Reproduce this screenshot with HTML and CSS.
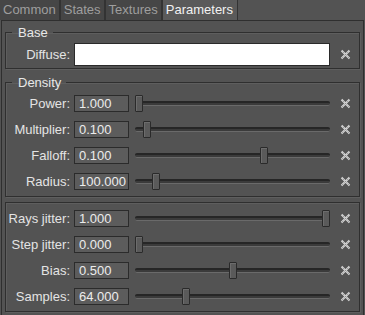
FILE: index.html
```html
<!DOCTYPE html>
<html>
<head>
<meta charset="utf-8">
<link rel="stylesheet" href="styles.css">
</head>
<body>
<div class="tabs">
  <div class="tab">Common</div>
  <div class="tab">States</div>
  <div class="tab">Textures</div>
  <div class="tab active">Parameters</div>
</div>
<div class="pane">
  <fieldset class="group">
    <legend>Base</legend>
    <div class="grid">
      <label class="lbl">Diffuse:</label>
      <div class="color-input"></div>
      <span class="clear tall"><svg width="11" height="11" viewBox="0 0 11 11"><path d="M1.5 1.5L9.5 9.5M9.5 1.5L1.5 9.5" stroke="#d4d4d4" stroke-width="2"/><path d="M1.5 1.5L9.5 9.5M9.5 1.5L1.5 9.5" stroke="#777" stroke-width="0.9" stroke-dasharray="0.9 1.5"/></svg></span>
    </div>
  </fieldset>

  <fieldset class="group density">
    <legend>Density</legend>
    <div class="grid rows">
      <label class="lbl">Power:</label><div class="spin">1.000</div>
      <div class="slider"><div class="groove"></div><div class="handle" style="left:calc(0 * (100% - 8px))"></div></div>
      <span class="clear"><svg width="11" height="11" viewBox="0 0 11 11"><path d="M1.5 1.5L9.5 9.5M9.5 1.5L1.5 9.5" stroke="#d4d4d4" stroke-width="2"/><path d="M1.5 1.5L9.5 9.5M9.5 1.5L1.5 9.5" stroke="#777" stroke-width="0.9" stroke-dasharray="0.9 1.5"/></svg></span>

      <label class="lbl">Multiplier:</label><div class="spin">0.100</div>
      <div class="slider"><div class="groove"></div><div class="handle" style="left:calc(0.043 * (100% - 8px))"></div></div>
      <span class="clear"><svg width="11" height="11" viewBox="0 0 11 11"><path d="M1.5 1.5L9.5 9.5M9.5 1.5L1.5 9.5" stroke="#d4d4d4" stroke-width="2"/><path d="M1.5 1.5L9.5 9.5M9.5 1.5L1.5 9.5" stroke="#777" stroke-width="0.9" stroke-dasharray="0.9 1.5"/></svg></span>

      <label class="lbl">Falloff:</label><div class="spin">0.100</div>
      <div class="slider"><div class="groove"></div><div class="handle" style="left:calc(0.67 * (100% - 8px))"></div></div>
      <span class="clear"><svg width="11" height="11" viewBox="0 0 11 11"><path d="M1.5 1.5L9.5 9.5M9.5 1.5L1.5 9.5" stroke="#d4d4d4" stroke-width="2"/><path d="M1.5 1.5L9.5 9.5M9.5 1.5L1.5 9.5" stroke="#777" stroke-width="0.9" stroke-dasharray="0.9 1.5"/></svg></span>

      <label class="lbl">Radius:</label><div class="spin">100.000</div>
      <div class="slider"><div class="groove"></div><div class="handle" style="left:calc(0.09 * (100% - 8px))"></div></div>
      <span class="clear"><svg width="11" height="11" viewBox="0 0 11 11"><path d="M1.5 1.5L9.5 9.5M9.5 1.5L1.5 9.5" stroke="#d4d4d4" stroke-width="2"/><path d="M1.5 1.5L9.5 9.5M9.5 1.5L1.5 9.5" stroke="#777" stroke-width="0.9" stroke-dasharray="0.9 1.5"/></svg></span>
    </div>
  </fieldset>

  <fieldset class="group plain">
    <div class="grid rows">
      <label class="lbl">Rays jitter:</label><div class="spin">1.000</div>
      <div class="slider"><div class="groove"></div><div class="handle" style="left:calc(1 * (100% - 8px))"></div></div>
      <span class="clear"><svg width="11" height="11" viewBox="0 0 11 11"><path d="M1.5 1.5L9.5 9.5M9.5 1.5L1.5 9.5" stroke="#d4d4d4" stroke-width="2"/><path d="M1.5 1.5L9.5 9.5M9.5 1.5L1.5 9.5" stroke="#777" stroke-width="0.9" stroke-dasharray="0.9 1.5"/></svg></span>

      <label class="lbl">Step jitter:</label><div class="spin">0.000</div>
      <div class="slider"><div class="groove"></div><div class="handle" style="left:calc(0 * (100% - 8px))"></div></div>
      <span class="clear"><svg width="11" height="11" viewBox="0 0 11 11"><path d="M1.5 1.5L9.5 9.5M9.5 1.5L1.5 9.5" stroke="#d4d4d4" stroke-width="2"/><path d="M1.5 1.5L9.5 9.5M9.5 1.5L1.5 9.5" stroke="#777" stroke-width="0.9" stroke-dasharray="0.9 1.5"/></svg></span>

      <label class="lbl">Bias:</label><div class="spin">0.500</div>
      <div class="slider"><div class="groove"></div><div class="handle" style="left:calc(0.5 * (100% - 8px))"></div></div>
      <span class="clear"><svg width="11" height="11" viewBox="0 0 11 11"><path d="M1.5 1.5L9.5 9.5M9.5 1.5L1.5 9.5" stroke="#d4d4d4" stroke-width="2"/><path d="M1.5 1.5L9.5 9.5M9.5 1.5L1.5 9.5" stroke="#777" stroke-width="0.9" stroke-dasharray="0.9 1.5"/></svg></span>

      <label class="lbl">Samples:</label><div class="spin">64.000</div>
      <div class="slider"><div class="groove"></div><div class="handle" style="left:calc(0.25 * (100% - 8px))"></div></div>
      <span class="clear"><svg width="11" height="11" viewBox="0 0 11 11"><path d="M1.5 1.5L9.5 9.5M9.5 1.5L1.5 9.5" stroke="#d4d4d4" stroke-width="2"/><path d="M1.5 1.5L9.5 9.5M9.5 1.5L1.5 9.5" stroke="#777" stroke-width="0.9" stroke-dasharray="0.9 1.5"/></svg></span>
    </div>
  </fieldset>
</div>
</body>
</html>
```

FILE: styles.css
```css
* { box-sizing: border-box; }
html, body {
  margin: 0;
  padding: 0;
  background: #535353;
  width: 365px;
  height: 315px;
  overflow: hidden;
}
body {
  font-family: "Liberation Sans", Arial, sans-serif;
  font-size: 13px;
  color: #e4e4e4;
}
.tabs {
  display: flex;
  height: 20px;
}
.tab {
  height: 20px;
  line-height: 20px;
  padding: 0 3px 0 3px;
  background: #464646;
  color: #9e9e9e;
  border-right: 2px solid #333;
  white-space: nowrap;
}
.tab.active {
  background: #5a5a5a;
  color: #f2f2f2;
  border-right: 1px solid #333;
  padding: 0 4px 0 3px;
}
.pane {
  margin: 0 1px;
  height: 295px;
  border: 1px solid #2f2f2f;
  border-bottom: 0;
  padding-top: 4px;
  display: flex;
  flex-direction: column;
}
.group {
  margin: 0 3px 0 3px;
  padding: 3px 0 2px 0;
  border: 1px solid #2f2f2f;
  box-shadow: 1px 1px 0 #5e5e5e, inset 1px 1px 0 #5e5e5e;
  min-width: 0;
}
.group legend {
  margin-left: 6px;
  padding: 0 5px 0 6px;
  line-height: 15px;
  color: #e8e8e8;
}
.density {
  margin-top: 6px;
  padding: 5px 0 6px 0;
}
.plain {
  margin-top: 5px;
  padding: 7px 0 6px 0;
}
.grid {
  display: grid;
  grid-template-columns: 65px 58px 201px 30px;
  align-items: center;
}
.rows {
  row-gap: 9px;
}
.lbl {
  text-align: right;
  white-space: nowrap;
  line-height: 17px;
  padding-right: 1px;
}
.color-input {
  grid-column: 2 / 4;
  margin-left: 3px;
  height: 23px;
  background: #ffffff;
  border: 1px solid #2a2a2a;
}
.spin {
  margin-left: 3px;
  height: 17px;
  line-height: 15px;
  padding-left: 4px;
  background: #5c5c5c;
  border: 1px solid #2b2b2b;
  color: #ececec;
}
.slider {
  position: relative;
  height: 17px;
  margin-left: 6px;
}
.groove {
  position: absolute;
  left: 0;
  right: 0;
  top: 6px;
  height: 5px;
  border-radius: 2px;
  background: #3b3b3b;
  border-top: 2px solid #262626;
  border-bottom: 1px solid #6a6a6a;
}
.handle {
  position: absolute;
  top: 0;
  width: 8px;
  height: 17px;
  background: #5a5a5a;
  border: 1px solid #2a2a2a;
  border-radius: 1px;
  box-shadow: inset 1px 1px 0 #6c6c6c;
}
.clear {
  display: flex;
  justify-content: center;
  align-items: center;
  height: 17px;
}
.clear.tall { height: 23px; }
.clear svg { display: block; }
```
